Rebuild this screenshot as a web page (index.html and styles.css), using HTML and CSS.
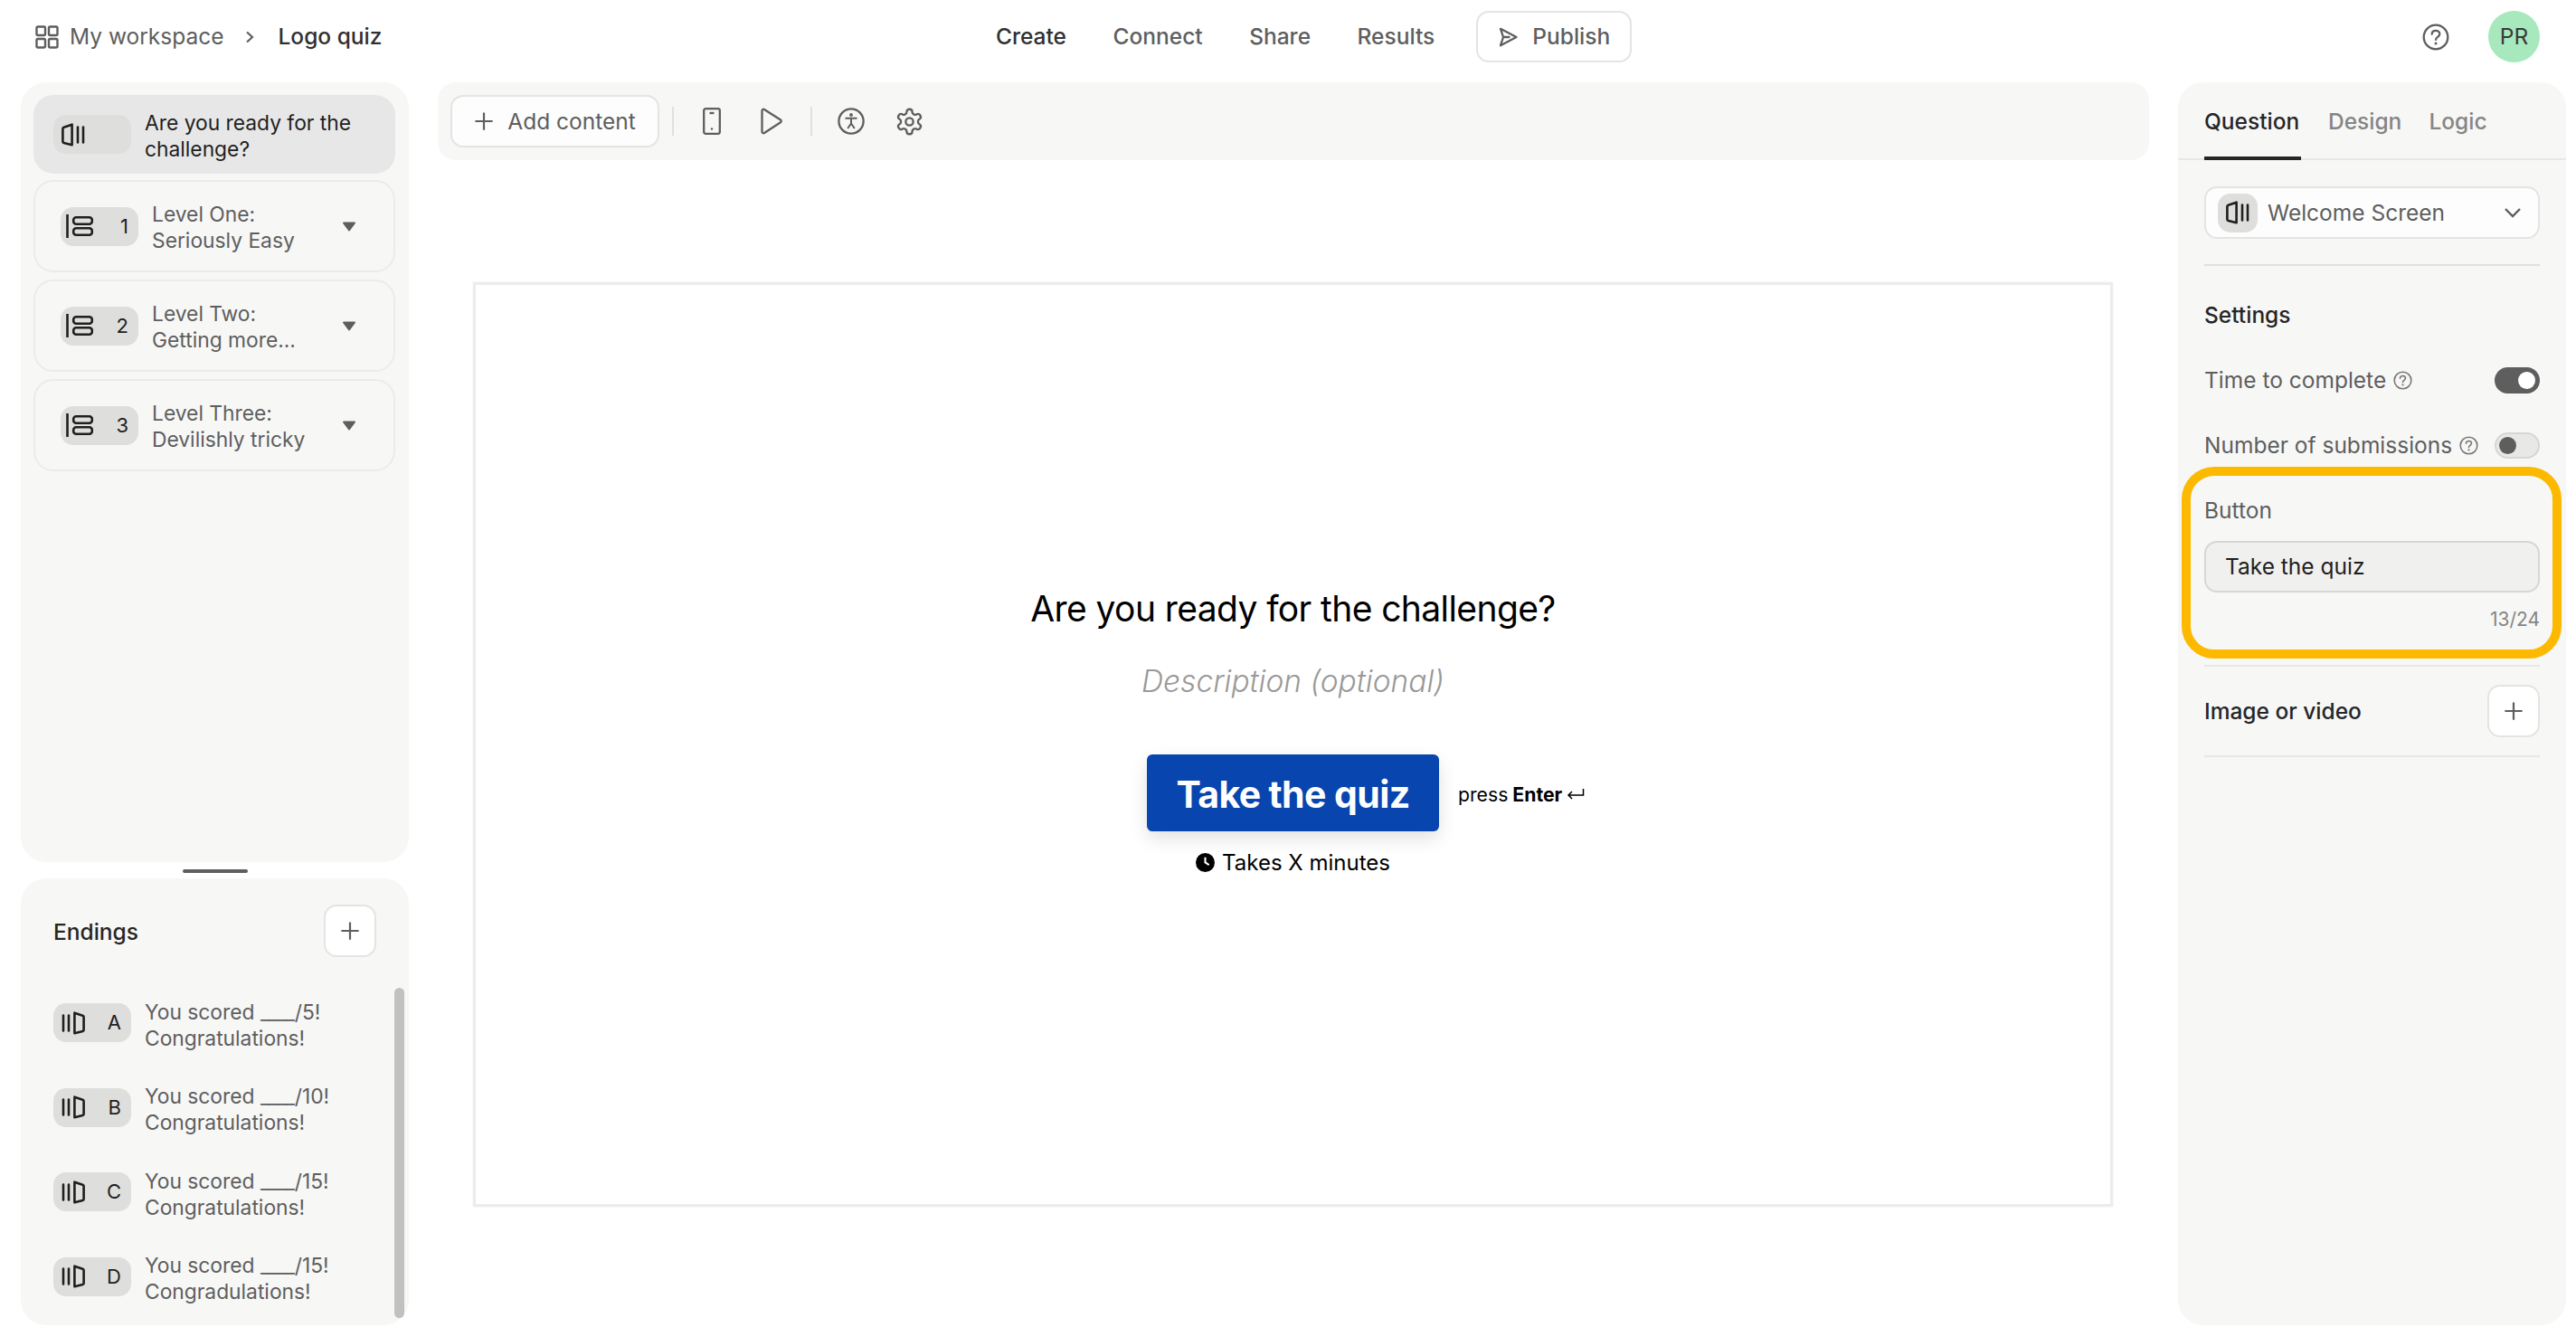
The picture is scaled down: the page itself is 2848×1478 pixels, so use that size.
FILE: index.html
```html
<!DOCTYPE html>
<html lang="en">
<head>
<meta charset="utf-8">
<title>Logo quiz</title>
<link rel="stylesheet" href="styles.css">
</head>
<body>
<svg class="defs" width="0" height="0" aria-hidden="true">
  <symbol id="i-welcome" viewBox="0 0 26 26"><path d="M1.4 6.2c0-.8.5-1.300 1.200-1.500l9-3v22.600l-9-2.400c-.8-.2-1.200-.8-1.200-1.500z" fill="none" stroke="currentColor" stroke-width="2.600" stroke-linejoin="round"/><path d="M18 4.500v17M24 4.500v17" fill="none" stroke="currentColor" stroke-width="2.600" stroke-linecap="round"/></symbol>
  <symbol id="i-ending" viewBox="0 0 26 26"><path d="M24.600 6.200c0-.8-.5-1.300-1.200-1.500l-9-3v22.600l9-2.400c.8-.2 1.200-.8 1.200-1.500z" fill="none" stroke="currentColor" stroke-width="2.600" stroke-linejoin="round"/><path d="M2 4.500v17M8 4.500v17" fill="none" stroke="currentColor" stroke-width="2.600" stroke-linecap="round"/></symbol>
  <symbol id="i-group" viewBox="0 0 30 26"><path d="M1.500 0v26" fill="none" stroke="currentColor" stroke-width="2.600"/><rect x="8.200" y="3.200" width="20.600" height="7.600" rx="3" fill="none" stroke="currentColor" stroke-width="2.600"/><rect x="8.200" y="15.200" width="20.600" height="7.600" rx="3" fill="none" stroke="currentColor" stroke-width="2.600"/></symbol>
  <symbol id="i-plus" viewBox="0 0 24 24"><path d="M12 1.500v21M1.500 12h21" fill="none" stroke="currentColor" stroke-width="2.400"/></symbol>
  <symbol id="i-help" viewBox="0 0 30 30"><circle cx="15" cy="15" r="13.300" fill="none" stroke="currentColor" stroke-width="2.300"/><path d="M10.700 11.800c0-2.500 1.900-4 4.300-4s4.300 1.500 4.300 3.800c0 3.300-4.300 3.300-4.300 6.300" fill="none" stroke="currentColor" stroke-width="2.300" stroke-linecap="round"/><circle cx="15" cy="22" r="1.500" fill="currentColor"/></symbol>
</svg>

<header class="topbar">
  <div class="crumbs">
    <svg class="grid-icon" viewBox="0 0 26 26" width="26" height="26"><g fill="none" stroke="currentColor" stroke-width="2.400"><rect x="1.500" y="1.500" width="9.500" height="9.500" rx="1.500"/><rect x="15" y="1.500" width="9.500" height="9.500" rx="1.500"/><rect x="1.500" y="15" width="9.500" height="9.500" rx="1.500"/><rect x="15" y="15" width="9.500" height="9.500" rx="1.500"/></g></svg>
    <span class="crumb-root">My workspace</span>
    <svg class="crumb-sep" viewBox="0 0 10 14" width="10" height="14"><path d="M2 1.500 8 7l-6 5.500" fill="none" stroke="currentColor" stroke-width="2.200"/></svg>
    <span class="crumb-current">Logo quiz</span>
  </div>
  <nav class="nav">
    <a class="nav-link nav-active">Create</a>
    <a class="nav-link">Connect</a>
    <a class="nav-link">Share</a>
    <a class="nav-link">Results</a>
    <button class="publish">
      <svg viewBox="0 0 24 24" width="24" height="24"><path d="M4 2.800 21.500 12 4 21.200 7 12zM7 12h6.500" fill="none" stroke="currentColor" stroke-width="2.300" stroke-linejoin="round" stroke-linecap="round"/></svg>
      Publish
    </button>
  </nav>
  <div class="account">
    <svg class="help" width="30" height="30"><use href="#i-help"/></svg>
    <div class="avatar">PR</div>
  </div>
</header>

<main class="workspace">
  <aside class="left">
    <section class="panel content-panel">
      <div class="item item-current">
        <span class="chip"><svg width="26" height="26"><use href="#i-welcome"/></svg></span>
        <span class="item-text">Are you ready for the challenge?</span>
      </div>
      <div class="item item-group">
        <span class="chip"><svg width="30" height="26"><use href="#i-group"/></svg><b>1</b></span>
        <span class="item-text">Level One:<br>Seriously Easy</span>
        <svg class="caret" viewBox="0 0 16 11" width="16" height="11"><path d="M2 1.500h12L8 9.500z" fill="currentColor" stroke="currentColor" stroke-width="2" stroke-linejoin="round"/></svg>
      </div>
      <div class="item item-group">
        <span class="chip"><svg width="30" height="26"><use href="#i-group"/></svg><b>2</b></span>
        <span class="item-text">Level Two:<br>Getting more...</span>
        <svg class="caret" viewBox="0 0 16 11" width="16" height="11"><path d="M2 1.500h12L8 9.500z" fill="currentColor" stroke="currentColor" stroke-width="2" stroke-linejoin="round"/></svg>
      </div>
      <div class="item item-group">
        <span class="chip"><svg width="30" height="26"><use href="#i-group"/></svg><b>3</b></span>
        <span class="item-text">Level Three:<br>Devilishly tricky</span>
        <svg class="caret" viewBox="0 0 16 11" width="16" height="11"><path d="M2 1.500h12L8 9.500z" fill="currentColor" stroke="currentColor" stroke-width="2" stroke-linejoin="round"/></svg>
      </div>
    </section>
    <div class="handle-row"><span class="handle"></span></div>
    <section class="panel endings-panel">
      <div class="endings-head">
        <span class="strong-label endings-title">Endings</span>
        <button class="icon-btn"><svg width="22" height="22"><use href="#i-plus"/></svg></button>
      </div>
      <div class="endings-list">
        <div class="ending">
          <span class="chip"><svg width="26" height="26"><use href="#i-ending"/></svg><b>A</b></span>
          <span class="item-text">You scored <span class="blank">____</span>/5!<br>Congratulations!</span>
        </div>
        <div class="ending">
          <span class="chip"><svg width="26" height="26"><use href="#i-ending"/></svg><b>B</b></span>
          <span class="item-text">You scored <span class="blank">____</span>/10!<br>Congratulations!</span>
        </div>
        <div class="ending">
          <span class="chip"><svg width="26" height="26"><use href="#i-ending"/></svg><b>C</b></span>
          <span class="item-text">You scored <span class="blank">____</span>/15!<br>Congratulations!</span>
        </div>
        <div class="ending">
          <span class="chip"><svg width="26" height="26"><use href="#i-ending"/></svg><b>D</b></span>
          <span class="item-text">You scored <span class="blank">____</span>/15!<br>Congradulations!</span>
        </div>
      </div>
      <span class="scroll-thumb"></span>
    </section>
  </aside>

  <section class="center">
    <div class="toolbar">
      <button class="add-content"><svg width="22" height="22"><use href="#i-plus"/></svg>Add content</button>
      <span class="tool-sep"></span>
      <svg class="tool tool-phone" viewBox="0 0 20 30" width="20" height="30"><rect x="1.200" y="1.200" width="17.600" height="27.600" rx="2" fill="none" stroke="currentColor" stroke-width="2.300"/><path d="M7.500 6h5" stroke="currentColor" stroke-width="2.300"/><circle cx="10" cy="23.500" r="1.200" fill="currentColor"/></svg>
      <svg class="tool tool-play" viewBox="0 0 26 30" width="26" height="30"><path d="M2.500 3.500c0-1.500 1.300-2.200 2.500-1.500l18 11.500c1 .7 1 2 0 2.700L5 28c-1.200.7-2.500 0-2.500-1.500z" fill="none" stroke="currentColor" stroke-width="2.300" stroke-linejoin="round"/></svg>
      <span class="tool-sep tool-sep-2"></span>
      <svg class="tool tool-access" viewBox="0 0 30 30" width="30" height="30"><circle cx="15" cy="15" r="13.600" fill="none" stroke="currentColor" stroke-width="2.300"/><circle cx="15" cy="8" r="1.900" fill="currentColor"/><path d="M8.500 11.800h13M15 11.800v6M15 17.500l-3.800 5.500M15 17.500l3.800 5.500" fill="none" stroke="currentColor" stroke-width="2"/></svg>
      <svg class="tool tool-gear" viewBox="0 0 24 24" width="33" height="33"><path d="M12.220 2h-.44a2 2 0 0 0-2 2v.18a2 2 0 0 1-1 1.730l-.43.250a2 2 0 0 1-2 0l-.15-.08a2 2 0 0 0-2.730.730l-.22.380a2 2 0 0 0 .73 2.730l.15.100a2 2 0 0 1 1 1.720v.510a2 2 0 0 1-1 1.740l-.15.090a2 2 0 0 0-.73 2.730l.22.380a2 2 0 0 0 2.730.730l.15-.08a2 2 0 0 1 2 0l.43.250a2 2 0 0 1 1 1.730V20a2 2 0 0 0 2 2h.44a2 2 0 0 0 2-2v-.18a2 2 0 0 1 1-1.730l.43-.25a2 2 0 0 1 2 0l.15.080a2 2 0 0 0 2.730-.73l.22-.39a2 2 0 0 0-.73-2.730l-.15-.08a2 2 0 0 1-1-1.740v-.5a2 2 0 0 1 1-1.740l.15-.09a2 2 0 0 0 .73-2.730l-.22-.38a2 2 0 0 0-2.730-.73l-.15.080a2 2 0 0 1-2 0l-.43-.25a2 2 0 0 1-1-1.730V4a2 2 0 0 0-2-2z" fill="none" stroke="currentColor" stroke-width="1.700"/><circle cx="12" cy="12" r="3" fill="none" stroke="currentColor" stroke-width="1.700"/></svg>
    </div>
    <div class="canvas">
      <h1 class="q-title">Are you ready for the challenge?</h1>
      <p class="q-desc">Description (optional)</p>
      <div class="cta-row">
        <button class="cta">Take the quiz</button>
        <span class="press">press <b>Enter</b> <svg viewBox="0 0 20 14" width="20" height="14"><path d="M18.500 1v7H2M6 4 2 8l4 4" fill="none" stroke="currentColor" stroke-width="1.500"/></svg></span>
      </div>
      <div class="takes">
        <svg viewBox="0 0 20 20" width="21" height="21"><circle cx="10" cy="10" r="10" fill="currentColor"/><path d="M10 4.500V10l4 2.500" fill="none" stroke="#fff" stroke-width="2"/></svg>
        Takes X minutes
      </div>
    </div>
  </section>

  <aside class="panel right">
    <div class="tabs">
      <span class="tab tab-active">Question</span>
      <span class="tab">Design</span>
      <span class="tab">Logic</span>
    </div>
    <div class="right-body">
      <div class="type-select">
        <span class="chip chip-square"><svg width="26" height="26"><use href="#i-welcome"/></svg></span>
        <span class="type-name">Welcome Screen</span>
        <svg class="chev" viewBox="0 0 20 12" width="20" height="12"><path d="M2 2l8 8 8-8" fill="none" stroke="currentColor" stroke-width="2.400"/></svg>
      </div>
      <div class="settings">
        <div class="strong-label settings-title">Settings</div>
        <div class="setting setting-first">
          <span class="setting-label">Time to complete<svg class="mini-help" width="21" height="21"><use href="#i-help"/></svg></span>
          <span class="toggle toggle-on"></span>
        </div>
        <div class="setting setting-second">
          <span class="setting-label">Number of submissions<svg class="mini-help" width="21" height="21"><use href="#i-help"/></svg></span>
          <span class="toggle toggle-off"></span>
        </div>
        <div class="button-field">
          <div class="highlight"></div>
          <div class="setting-label">Button</div>
          <div class="field-input">Take the quiz</div>
          <div class="counter">13/24</div>
        </div>
      </div>
      <div class="media-row">
        <span class="strong-label">Image or video</span>
        <button class="icon-btn"><svg width="22" height="22"><use href="#i-plus"/></svg></button>
      </div>
    </div>
  </aside>
</main>
</body>
</html>
```
FILE: styles.css
```css
* { box-sizing: border-box; }
html, body { margin: 0; padding: 0; height: 100%; }
body {
  width: 2848px;
  height: 1478px;
  overflow: hidden;
  background: #fff;
  color: #5e5e5e;
  font-family: Inter, "Liberation Sans", sans-serif;
  font-size: 24.5px;
  line-height: 29px;
  display: flex;
  flex-direction: column;
}
button { font: inherit; color: inherit; cursor: pointer; }
.defs { position: absolute; }

/* top bar */
.topbar {
  height: 91px;
  flex: none;
  display: grid;
  grid-template-columns: 1062px auto 1fr;
  align-items: center;
  padding: 0 40px 10px 39px;
}
.crumbs { display: flex; align-items: center; }
.grid-icon { margin-right: 12px; }
.crumb-sep { margin: 0 26px 0 24px; }
.crumb-current { color: #303030; font-weight: 500; }
.nav { display: flex; align-items: center; gap: 51.5px; }
.nav-link { font-weight: 500; }
.nav-active { color: #303030; }
.publish {
  height: 57px;
  width: 172px;
  margin-left: -6px;
  background: #fff;
  border: 2px solid #e4e4e2;
  border-radius: 14px;
  display: flex;
  align-items: center;
  justify-content: center;
  gap: 15px;
  font-weight: 500;
}
.account { display: flex; justify-content: flex-end; align-items: center; gap: 43px; }
.avatar {
  width: 57px;
  height: 57px;
  border-radius: 50%;
  background: #a7e8bd;
  color: #3a3a3a;
  display: flex;
  align-items: center;
  justify-content: center;
}

/* layout */
.workspace {
  flex: 1;
  min-height: 0;
  display: flex;
  padding: 0 11px 13px 23px;
}
.panel { background: #f7f7f6; border-radius: 28px; }
.left { width: 429px; flex: none; display: flex; flex-direction: column; }

/* content list */
.content-panel {
  height: 862px;
  padding: 14px;
  display: flex;
  flex-direction: column;
  gap: 7px;
}
.item {
  width: 400px;
  display: flex;
  align-items: center;
  border-radius: 22px;
}
.item-current {
  height: 87px;
  background: #e7e7e7;
  padding-left: 22px;
  gap: 15px;
  color: #1f1f1f;
}
.item-group {
  height: 102px;
  margin-bottom: 1px;
  border: 2px solid #ebebe9;
  padding-left: 28px;
  gap: 15px;
}
.chip {
  width: 86px;
  height: 43px;
  flex: none;
  background: #dededd;
  border-radius: 14px;
  color: #1f1f1f;
  display: flex;
  align-items: center;
  justify-content: space-between;
  padding: 0 11px 0 9px;
}
.item-group .chip { padding: 0 11px 0 6px; }
.chip b { font-weight: 400; font-size: 22px; }
.item-text { flex: 1; min-width: 0; font-size: 22.8px; padding-top: 2px; }
.caret { flex: none; margin-right: 41px; color: #5e5e5e; }

.handle-row { height: 18px; flex: none; display: flex; justify-content: center; align-items: center; padding-top: 1px; }
.handle { width: 72px; height: 4px; border-radius: 2px; background: #5e5e5e; }

/* endings */
.endings-panel { flex: 1; position: relative; padding: 29px 36px 0 36px; }
.endings-head { display: flex; align-items: center; justify-content: space-between; height: 58px; margin-bottom: 51px; }
.endings-title { padding-top: 2px; }
.strong-label { color: #262626; font-weight: 500; }
.icon-btn {
  width: 58px;
  height: 58px;
  padding: 0;
  background: #fff;
  border: 2px solid #e4e4e2;
  border-radius: 14px;
  display: flex;
  align-items: center;
  justify-content: center;
  color: #5e5e5e;
}
.endings-list { display: flex; flex-direction: column; gap: 50.5px; }
.ending { display: flex; align-items: center; gap: 15px; height: 43px; }
.ending .item-text { padding-top: 4px; }
.blank { letter-spacing: -1.2px; margin-right: 1px; }
.scroll-thumb {
  position: absolute;
  left: 413px;
  top: 121px;
  width: 11px;
  height: 365px;
  border-radius: 6px;
  background: #c1c1c0;
}

/* center */
.center { width: 1956px; flex: none; padding-left: 32px; display: flex; flex-direction: column; }
.toolbar {
  height: 86px;
  flex: none;
  width: 1892px;
  background: #f7f7f6;
  border-radius: 20px;
  display: flex;
  align-items: center;
  padding-left: 14px;
}
.add-content {
  width: 231px;
  height: 58px;
  background: #fdfdfd;
  border: 2px solid #e4e4e2;
  border-radius: 14px;
  display: flex;
  align-items: center;
  justify-content: center;
  gap: 15px;
  padding: 0;
}
.tool-sep { width: 2px; height: 32px; background: #e0e0de; margin-left: 14px; }
.tool { flex: none; }
.tool-phone { margin-left: 32px; }
.tool-play { margin-left: 43px; }
.tool-sep-2 { margin-left: 30px; }
.tool-access { margin-left: 28px; }
.tool-gear { margin-left: 33px; }

.canvas {
  margin: 135px 0 0 39px;
  width: 1813px;
  height: 1022px;
  border: 3px solid #ececea;
  box-shadow: 0 0 3px rgba(0, 0, 0, .06);
  display: flex;
  flex-direction: column;
  align-items: center;
  padding-top: 331px;
}
.q-title {
  margin: 0;
  font-size: 39px;
  line-height: 54px;
  font-weight: 400;
  letter-spacing: -.6px;
  color: #000;
}
.q-desc {
  margin: 26px 0 0;
  font-size: 33.5px;
  line-height: 54px;
  font-style: italic;
  font-weight: 300;
  color: #999;
}
.cta-row {
  width: 100%;
  margin-top: 54px;
  display: grid;
  grid-template-columns: 1fr auto 1fr;
  align-items: center;
}
.cta {
  grid-column: 2;
  width: 323px;
  height: 85px;
  border: 0;
  border-radius: 6px;
  background: #0845ae;
  color: #fff;
  font-size: 41px;
  letter-spacing: -.6px;
  font-weight: 700;
  padding: 3px 0 0;
  box-shadow: 0 8px 20px rgba(0, 0, 0, .12);
}
.press {
  color: #000;
  font-size: 21.2px;
  margin-left: 21px;
  padding-top: 3px;
  display: flex;
  align-items: center;
  gap: 5px;
}
.press b { font-weight: 700; }
.takes {
  margin-top: 20px;
  font-size: 24px;
  color: #000;
  display: flex;
  align-items: center;
  gap: 8px;
}

/* right panel */
.right { width: 429px; flex: none; display: flex; flex-direction: column; }
.tabs {
  height: 86px;
  flex: none;
  display: flex;
  gap: 30px;
  padding: 0 29px;
  border-bottom: 2px solid #e7e7e5;
}
.tab { padding-top: 29px; height: 86px; color: #858585; font-weight: 500; }
.tab-active { color: #262626; border-bottom: 4px solid #262626; min-width: 107px; }
.right-body { padding: 29px 29px 0; }
.type-select {
  height: 58px;
  background: #fdfdfd;
  border: 2px solid #e4e4e2;
  border-radius: 14px;
  display: flex;
  align-items: center;
  padding-left: 13px;
}
.chip-square { width: 44px; justify-content: center; padding: 0; }
.type-name { margin-left: 11px; flex: 1; }
.chev { margin-right: 18px; }
.settings { margin-top: 28px; border-top: 2px solid #e0e0de; padding-top: 40px; }
.settings-title { height: 29px; margin-bottom: 43px; }
.setting { display: flex; align-items: center; justify-content: space-between; height: 29px; }
.setting-second { margin-top: 43px; }
.setting-label { display: flex; align-items: center; }
.mini-help { margin-left: 8px; color: #777; }
.toggle { width: 50px; height: 29px; border-radius: 15px; position: relative; }
.toggle::after { content: ""; position: absolute; top: 5px; width: 19px; height: 19px; border-radius: 50%; }
.toggle-on { background: #5e5e5e; }
.toggle-on::after { right: 5px; background: #fff; }
.toggle-off { background: #e8e8e7; border: 2px solid #d6d6d4; }
.toggle-off::after { left: 3px; top: 3px; background: #5e5e5e; }
.button-field { position: relative; margin-top: 43px; padding-bottom: 36px; border-bottom: 2px solid #e7e7e5; }
.field-input {
  margin-top: 19px;
  height: 57px;
  background: #f0f0ef;
  border: 2px solid #d6d6d4;
  border-radius: 14px;
  color: #1f1f1f;
  display: flex;
  align-items: center;
  padding-left: 21px;
}
.counter { margin-top: 15px; height: 29px; text-align: right; font-size: 21px; color: #858585; }
.highlight {
  position: absolute;
  left: -25px;
  right: -24px;
  top: -34px;
  bottom: 7px;
  border: 10px solid #fdb900;
  border-radius: 36px;
}
.media-row {
  height: 100px;
  display: flex;
  align-items: center;
  justify-content: space-between;
  border-bottom: 2px solid #e7e7e5;
}
```
